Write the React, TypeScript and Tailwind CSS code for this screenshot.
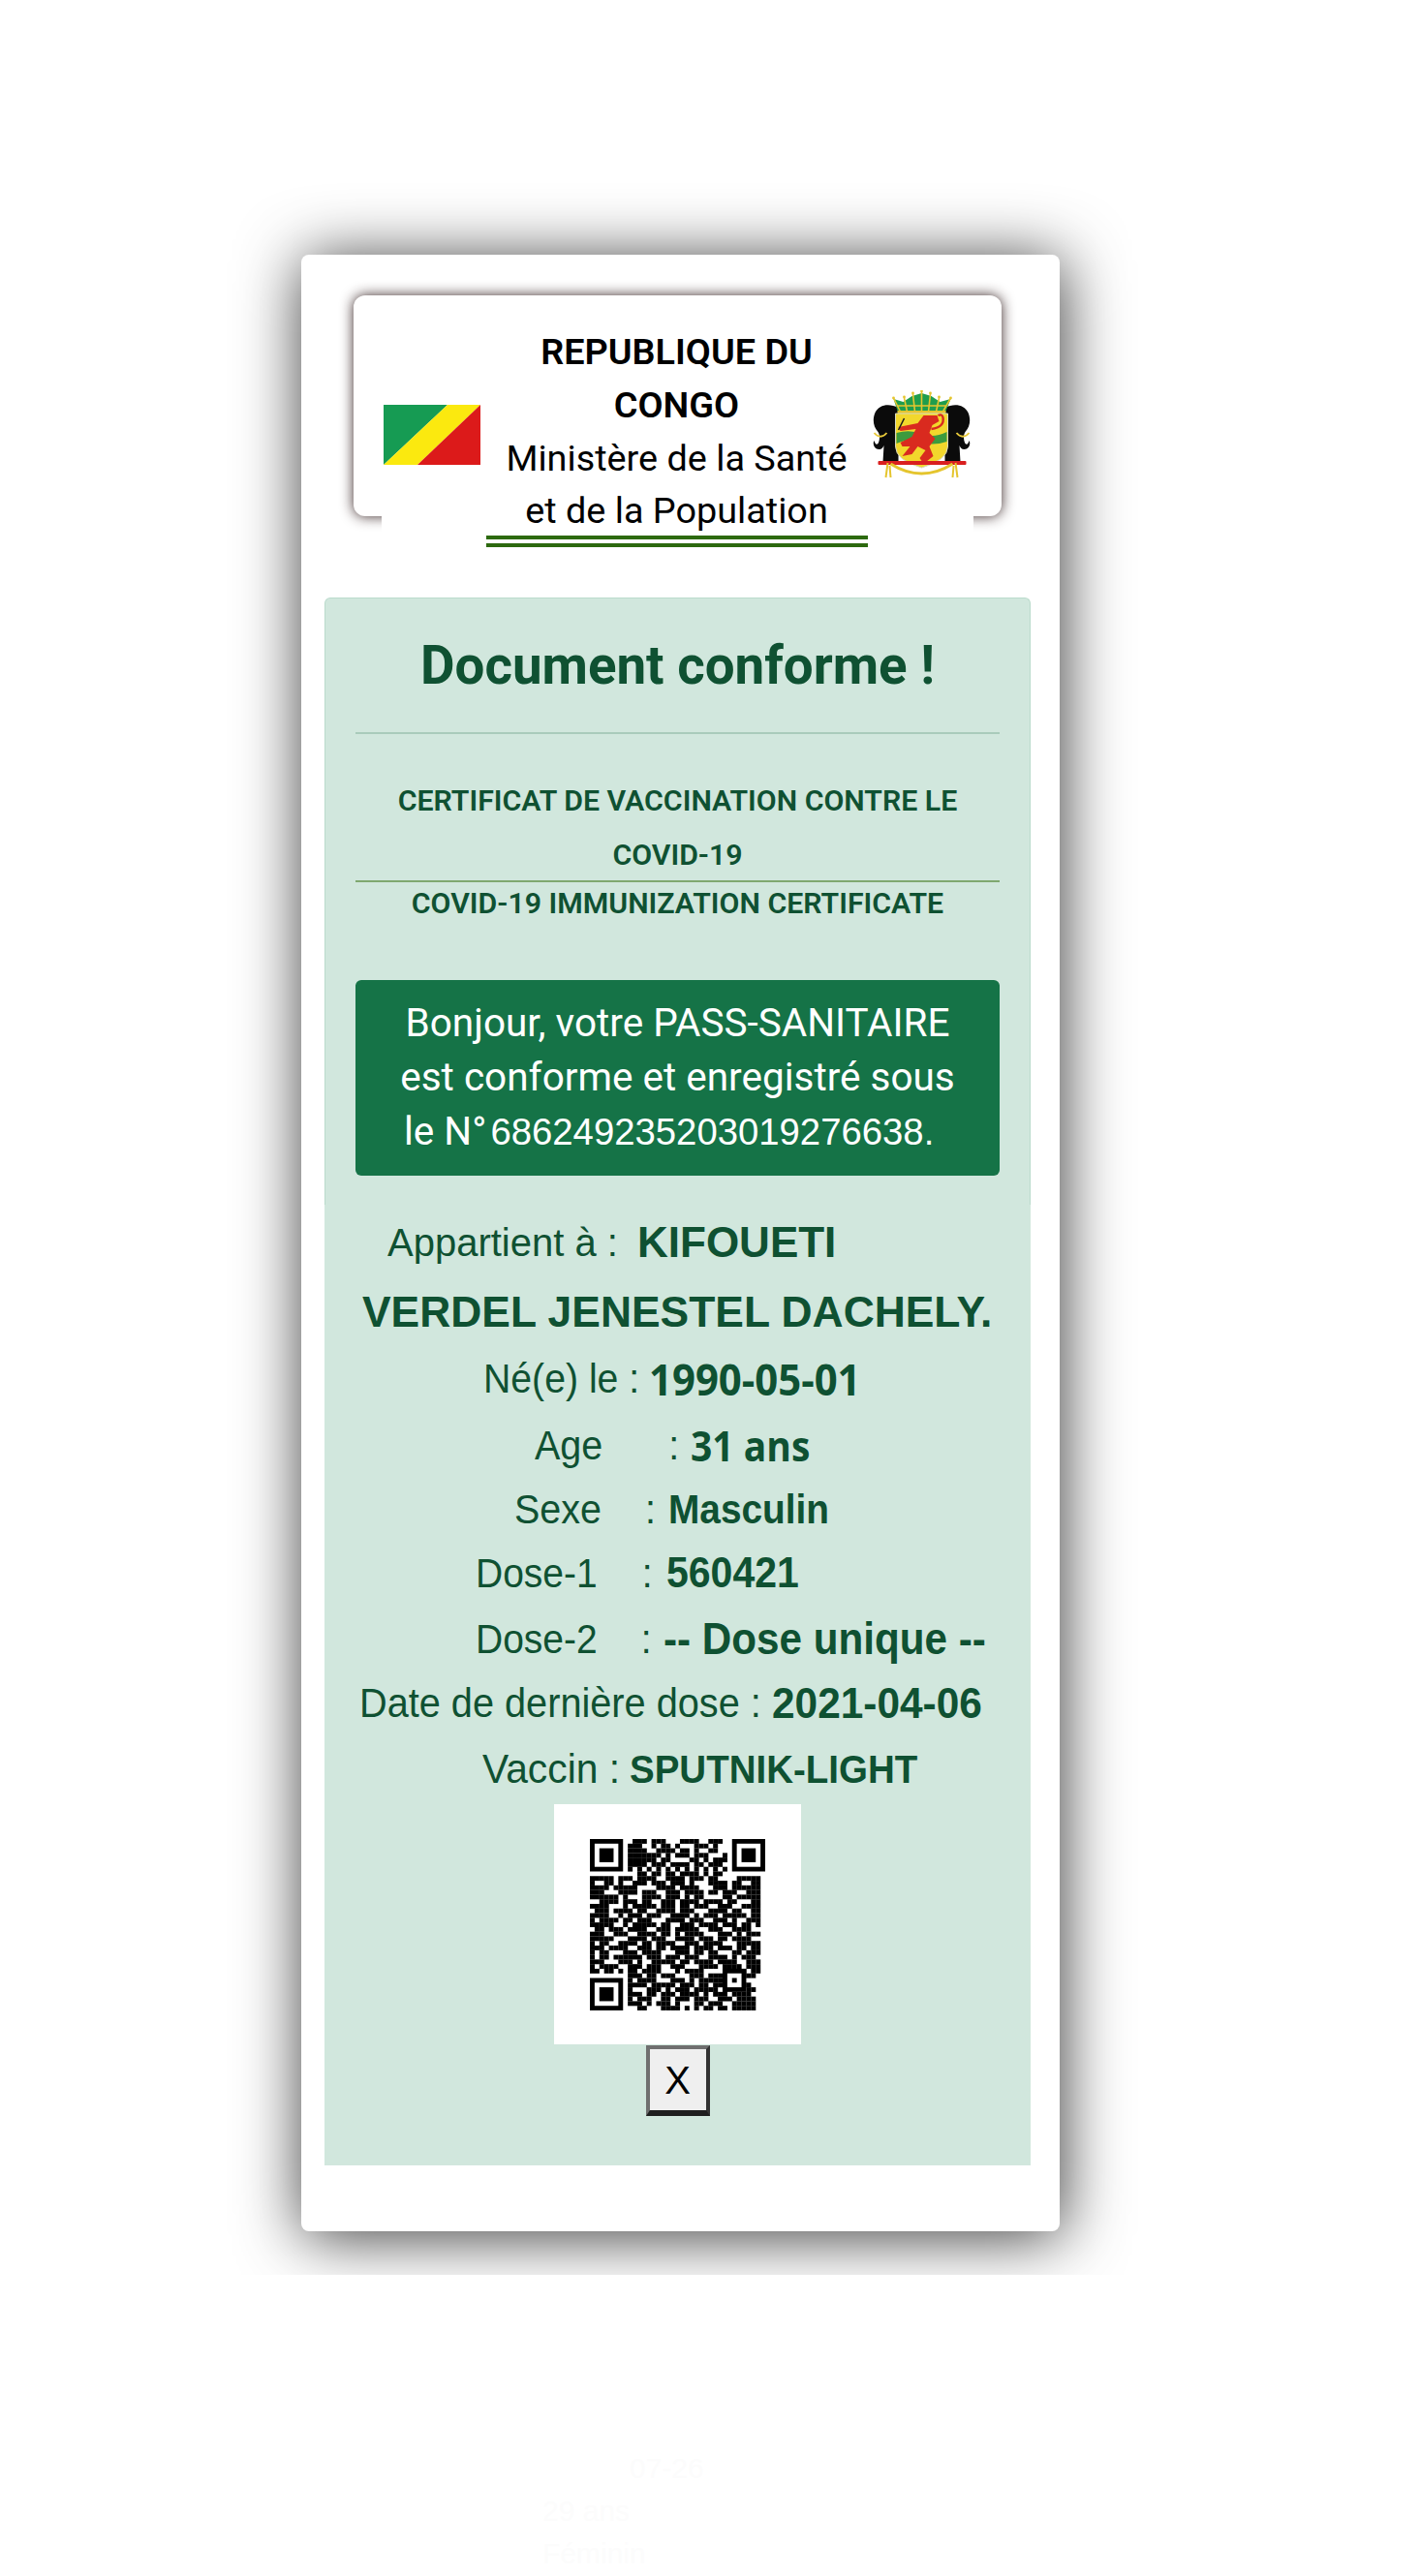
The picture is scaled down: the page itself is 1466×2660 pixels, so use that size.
const qrRows = [
  "........ .###.###...####..###. ........",
  "........ ###..#.##.#...###.#.. ........",
  "........ ####..####.##.#..##.. ........",
  "........ #######.#.###.###...# ........",
  "........ ######.##....##.#.### ........",
  "........ ####.###.####.##.###. ........",
  "........ #.#.#.#.#.#.#.#.#.#.# ........",
  "........ ..##.##.##.####.#.##. ........",
  "#####.###.####..####.###.##....#####",
  "#..##.#..###.###.###.#...####.##..##",
  "####.#####....####.####...###.######",
  "###...####.###..###.####.##.###..###",
  "######.#...####.###.#.##....##.#####",
  "..####.###.##..###.####.####.##...##",
  "####...#.#####.###.##.###..###..####",
  ".###.####.##..####.###...####.##..##",
  "####..#.###.###..####.#.###.#####.##",
  "#.####.##.###...####.###..###.#..###",
  "#####..#.#####.##..###.####.###.##.#",
  ".##.###.####..###.#####..###..####..",
  "###..###..####.##.#.####...###.#.###",
  "#####...####.###..####.###.##.####..",
  "#.##..####.##.####..###.####...#####",
  "###.####..###.##.####.####.###.##.##",
  "#.##...###.####...###.##.##...##.###",
  "#.##.######.###.###.###..####.#.###.",
  "###...###.#..#####.##.####.####..###",
  "#.####..###.###..###...####.####.###",
  "##.##.#.##.####...#.####....#####.##",
  "........ ###.##.###...###.####.#.###",
  "........ #.####...###.#.#####.#.#...",
  "........ ####.#####.###.##.###.####.",
  "........ #...###.#.###.#####.#....##",
  "........ ###.##.###.####.#.###.####.",
  "........ #.###..##.###.###..###.####",
  "........ ###.#.###.#...##.###..#####",
  "........ ..##...####.#.#.##.##.#####",
].map((r) => r.replace(/ /g, "").padEnd(37, ".").slice(0, 37));

function Finder({ x, y }: { x: number; y: number }) {
  return (
    <g>
      <rect x={x} y={y} width="7" height="7" fill="#000" />
      <rect x={x + 1} y={y + 1} width="5" height="5" fill="#fff" />
      <rect x={x + 2} y={y + 2} width="3" height="3" fill="#000" />
    </g>
  );
}

function QrCode() {
  return (
    <svg viewBox="0 0 37 37" preserveAspectRatio="none" className="h-[177px] w-[181px]">
      {qrRows.map((row, y) =>
        row.split("").map((c, x) =>
          c === "#" ? <rect key={`${x}-${y}`} x={x} y={y} width="1.02" height="1.02" fill="#000" /> : null
        )
      )}
      <Finder x={0} y={0} />
      <Finder x={30} y={0} />
      <Finder x={0} y={30} />
      {/* alignment mark */}
      <rect x="28" y="28" width="5" height="5" fill="#000" />
      <rect x="29" y="29" width="3" height="3" fill="#fff" />
      <rect x="30" y="30" width="1" height="1" fill="#000" />
    </svg>
  );
}

function Flag() {
  return (
    <svg viewBox="0 0 100 62" className="h-[62px] w-[100px] shrink-0">
      <polygon points="0,0 66,0 0,62" fill="#169b53" />
      <polygon points="66,0 100,0 35,62 0,62" fill="#fbe90f" />
      <polygon points="100,0 100,62 35,62" fill="#dc1a1a" />
    </svg>
  );
}

function Elephant() {
  return (
    <g>
      <path
        d="M58 40 C48 35 38 37 34 45 C31 52 32 60 37 65 C39 68 39 73 37 77 C35 79 34 77 33 74 C31 77 33 83 38 83 C41 83 42 81 43 79 L42 96 L58 96 Z"
        fill="#0b0b0b"
      />
      <path d="M33 66 C37 71 42 71 46 66" fill="none" stroke="#e8c93a" strokeWidth="1.8" />
    </g>
  );
}

function CoatOfArms() {
  return (
    <svg viewBox="32 22 100 92" className="h-[92px] w-[101px] shrink-0">
      <Elephant />
      <g transform="translate(164 0) scale(-1 1)">
        <Elephant />
      </g>
      {/* crown */}
      <path d="M58 46 L53 31 L63 34 L72 28 L82 25 L92 28 L101 34 L112 31 L106 46 Z" fill="#1f9d4d" />
      <path
        d="M53 30 L60 44 M64 30 L67 44 M73 26 L75 44 M82 24 L82 44 M91 26 L89 44 M100 30 L97 44 M112 30 L104 44 M56 38 H108"
        fill="none"
        stroke="#e5c52e"
        strokeWidth="1.6"
      />
      <circle cx="53" cy="30" r="1.4" fill="#e5c52e" />
      <circle cx="64" cy="29" r="1.4" fill="#e5c52e" />
      <circle cx="73" cy="25" r="1.4" fill="#e5c52e" />
      <circle cx="82" cy="23" r="1.4" fill="#e5c52e" />
      <circle cx="91" cy="25" r="1.4" fill="#e5c52e" />
      <circle cx="100" cy="29" r="1.4" fill="#e5c52e" />
      <circle cx="112" cy="30" r="1.4" fill="#e5c52e" />
      <rect x="57" y="43" width="50" height="3" fill="#e5c52e" />
      {/* shield */}
      <path d="M55 46 H109 V80 Q109 94 82 102 Q55 94 55 80 Z" fill="#f2d72c" stroke="#d8d8c0" strokeWidth="1" />
      <path d="M56 66 Q70 62 82 67 T108 65 V75 Q92 80 82 75 T56 77 Z" fill="#3c9a3e" />
      <path
        d="M84 48 L98 48 L100 54 L93 58 L90 66 L96 72 L90 80 L94 90 L84 98 L80 92 L86 84 L78 80 L72 88 L62 90 L70 80 L62 80 L60 76 L72 70 L76 62 L60 64 L58 60 L78 56 Z"
        fill="#d92a1f"
      />
      <path d="M92 62 Q106 60 104 50 Q103 46 99 48" fill="none" stroke="#d92a1f" strokeWidth="2.4" />
      <path d="M58 63 L64 51" stroke="#1a1a1a" strokeWidth="1.5" />
      {/* base */}
      <rect x="37" y="95" width="91" height="4" rx="1" fill="#d91f1f" />
      <path d="M50 98 Q82 118 114 98" fill="none" stroke="#e5c52e" strokeWidth="3" />
      <path d="M47 97 L45 112 M49 100 L50 112 M117 97 L119 112 M115 100 L114 112" stroke="#e5c52e" strokeWidth="2" />
    </svg>
  );
}

const roboto = "font-['Roboto',sans-serif]";

export default function App() {
  return (
    <div className="h-[2660px] overflow-hidden bg-white">
      <div className="h-[2349px] overflow-hidden pl-[311px] pt-[263px]">
        <div className="h-[2041px] w-[783px] rounded-lg bg-white pl-[24px] pr-[30px] pt-[42px] shadow-[2px_5px_66px_rgba(0,0,0,0.78)]">
          {/* Header */}
          <div className="ml-[30px] h-[228px] w-[669px] rounded-[12px] bg-white pt-[31px] shadow-[0_0_14px_rgba(50,30,30,0.95)]">
            <div className={`mx-[29px] flex h-[232px] items-start bg-white text-black ${roboto}`}>
              <div className="ml-[2px] mt-[82px]">
                <Flag />
              </div>
              <div className="flex w-[405px] shrink-0 flex-col items-center whitespace-nowrap text-center text-[37.8px] leading-[55px]">
                <p className="font-semibold">REPUBLIQUE DU</p>
                <p className="font-semibold">CONGO</p>
                <p>Ministère de la Santé</p>
                <p className="-mt-[1px]">et de la Population</p>
                <div className="-mt-[2px] h-[12px] w-[394px] border-y-4 border-[#2d6a0f]"></div>
              </div>
              <div className="mt-[67px]">
                <CoatOfArms />
              </div>
            </div>
          </div>

          {/* Success alert */}
          <div className={`mt-[84px] h-[627px] w-[729px] rounded-t-md border border-b-0 border-[#badbcc] bg-[#d1e7dd] px-[31px] pt-[39px] text-center text-[#0f5132] ${roboto}`}>
            <h1 className="text-[54.7px] font-bold leading-[60px]">Document conforme !</h1>
            <div className="mt-[39px] h-[2px] bg-[#a9cbbb]"></div>
            <div className="mt-[41px] whitespace-nowrap text-[30.3px] font-semibold leading-[56px]">
              <p>CERTIFICAT DE VACCINATION CONTRE LE</p>
              <p>COVID-19</p>
            </div>
            <div className="-mt-[2px] h-[2px] bg-[#7fa870]"></div>
            <p className="-mt-[1px] whitespace-nowrap text-[30.3px] font-semibold leading-[46px]">COVID-19 IMMUNIZATION CERTIFICATE</p>
            <div className="mt-[56px] h-[202px] rounded-md bg-[#157347] pt-[16px] text-[40.5px] leading-[56px] text-white">
              <p className="whitespace-nowrap">Bonjour, votre PASS-SANITAIRE</p>
              <p className="whitespace-nowrap">est conforme et enregistré sous</p>
              <p className="flex items-baseline whitespace-nowrap pl-[50px]">
                <span>le N°</span>
                <span className="ml-[4px] font-['Liberation_Sans',Arial,sans-serif] text-[38.3px]">686249235203019276638.</span>
              </p>
            </div>
          </div>

          {/* Holder details */}
          <div className="h-[992px] w-[729px] bg-[#d1e7dd] pt-[5px] font-['Liberation_Sans',Arial,sans-serif] text-[#0f5132]">
            <div className="flex h-[68px] items-center whitespace-nowrap pl-[65px]">
              <span className="w-[258px] text-[40px]">Appartient à :</span>
              <span className="text-[44px] font-bold">KIFOUETI</span>
            </div>
            <div className="mt-[4px] flex h-[68px] items-center whitespace-nowrap pl-[39px]">
              <span className="text-[44.4px] font-bold">VERDEL JENESTEL DACHELY.</span>
            </div>
            <div className="mt-[1px] flex h-[68px] scale-y-[1.08] items-center whitespace-nowrap pl-[164px]">
              <span className="w-[171px] text-[39.2px]">Né(e) le :</span>
              <span className="font-['Open_Sans',sans-serif] text-[41.9px] font-bold">1990-05-01</span>
            </div>
            <div className="mt-[1px] flex h-[68px] scale-y-[1.08] items-center whitespace-nowrap pl-[217px]">
              <span className="w-[161px] text-[39.5px]">
                Age<span className="ml-[68px]">:</span>
              </span>
              <span className="font-['Open_Sans',sans-serif] text-[39px] font-bold">31 ans</span>
            </div>
            <div className="-mt-[2px] flex h-[68px] scale-y-[1.08] items-center whitespace-nowrap pl-[196px]">
              <span className="w-[159px] text-[39.5px]">
                Sexe<span className="ml-[45px]">:</span>
              </span>
              <span className="text-[38.8px] font-bold">Masculin</span>
            </div>
            <div className="-mt-[2px] flex h-[68px] scale-y-[1.08] items-center whitespace-nowrap pl-[156px]">
              <span className="w-[197px] text-[39px]">
                Dose-1<span className="ml-[46px]">:</span>
              </span>
              <span className="text-[41px] font-bold">560421</span>
            </div>
            <div className="flex h-[68px] scale-y-[1.08] items-center whitespace-nowrap pl-[156px]">
              <span className="w-[194px] text-[39px]">
                Dose-2<span className="ml-[45px]">:</span>
              </span>
              <span className="text-[42.2px] font-bold">-- Dose unique --</span>
            </div>
            <div className="-mt-[2px] flex h-[68px] scale-y-[1.05] items-center whitespace-nowrap pl-[36px]">
              <span className="w-[426px] text-[39.7px]">Date de dernière dose :</span>
              <span className="text-[42.4px] font-bold">2021-04-06</span>
            </div>
            <div className="flex h-[68px] scale-y-[1.05] items-center whitespace-nowrap pl-[163px]">
              <span className="w-[152px] text-[40.8px]">Vaccin :</span>
              <span className="text-[38.5px] font-bold">SPUTNIK-LIGHT</span>
            </div>
            <div className="mx-auto mt-[2px] flex h-[248px] w-[255px] items-center justify-center bg-white">
              <QrCode />
            </div>
            <button className="mx-auto mt-[1px] flex h-[73px] w-[66px] items-center justify-center border-b-[6px] border-l-[4px] border-r-[4px] border-t-[4px] border-b-[#1f1f1f] border-l-[#6f6f6f] border-r-[#333333] border-t-[#6f6f6f] bg-[#efefef] text-[40px] text-black">
              X
            </button>
          </div>
        </div>
      </div>

      {/* Ghost of the page underneath */}
      <div className="pl-[560px] pt-[178px] font-['Liberation_Sans',Arial,sans-serif] text-[30px] leading-[44px] text-[#fcfcfc]">
        <p className="pl-[90px]">07-26</p>
        <p>29 ans</p>
        <p>Féminin</p>
      </div>
    </div>
  );
}
